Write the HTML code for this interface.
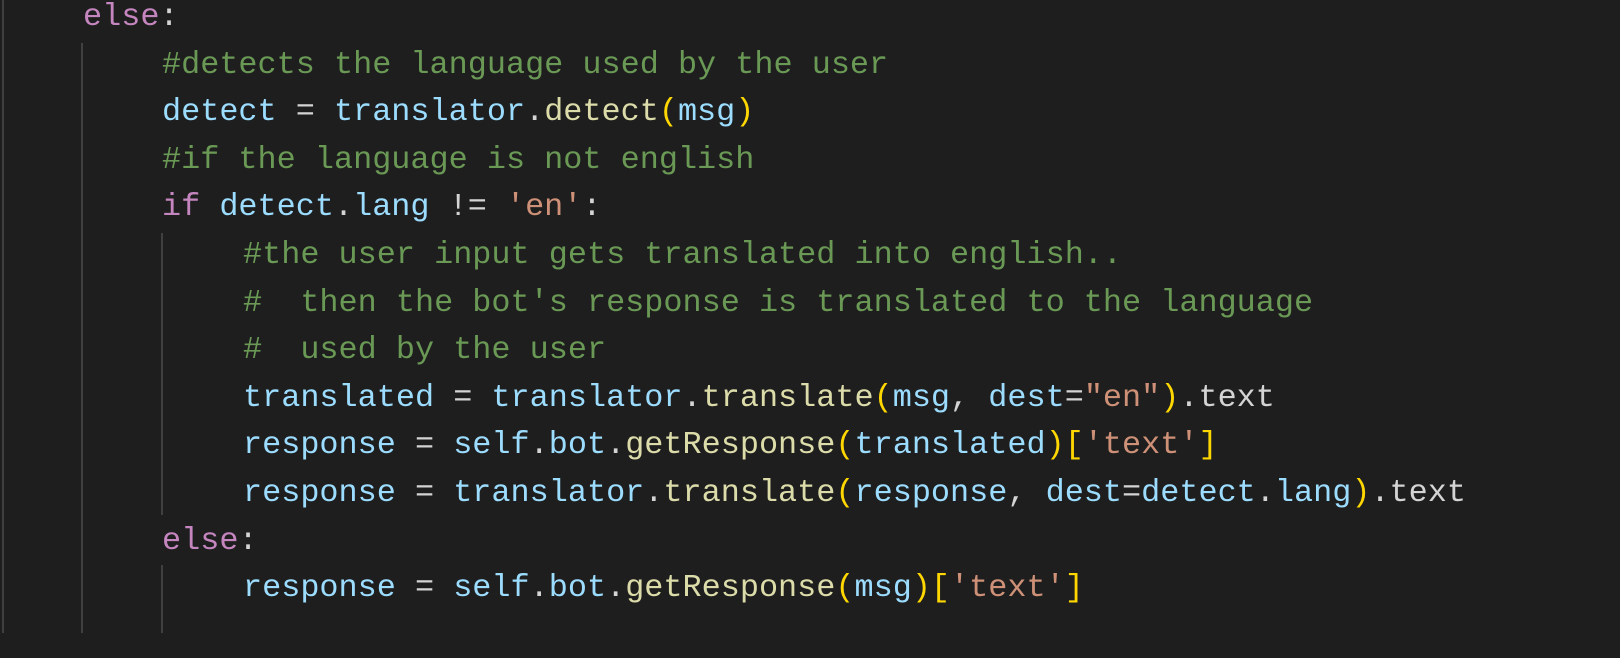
<!DOCTYPE html>
<html><head><style>
html,body{margin:0;padding:0;background:#1e1e1e;width:1620px;height:658px;overflow:hidden;position:relative}
.l{position:absolute;left:0;height:47.6px;line-height:47.6px;font-family:"Liberation Mono",monospace;font-size:31.85px;color:#d4d4d4;white-space:pre}
.k{color:#c586c0}.c{color:#6a9955}.v{color:#9cdcfe}.f{color:#dcdcaa}.s{color:#ce9178}.b{color:#ffd700}.p{color:#d4d4d4}
.g{position:absolute;width:2px;background:#404040}
</style></head><body>
<div class="g" style="left:2px;top:0;height:633px"></div>
<div class="g" style="left:81px;top:43px;height:590px"></div>
<div class="g" style="left:161px;top:233px;height:282px"></div>
<div class="g" style="left:161px;top:565px;height:68px"></div>

<div class="l" style="top:-7px;left:83px"><span class="k">else</span>:</div>
<div class="l" style="top:40.6px;left:162px"><span class="c">#detects the language used by the user</span></div>
<div class="l" style="top:88.2px;left:162px"><span class="v">detect</span> = <span class="v">translator</span>.<span class="f">detect</span><span class="b">(</span><span class="v">msg</span><span class="b">)</span></div>
<div class="l" style="top:135.8px;left:162px"><span class="c">#if the language is not english</span></div>
<div class="l" style="top:183.4px;left:162px"><span class="k">if</span> <span class="v">detect</span>.<span class="v">lang</span> != <span class="s">'en'</span>:</div>
<div class="l" style="top:231px;left:243px"><span class="c">#the user input gets translated into english..</span></div>
<div class="l" style="top:278.6px;left:243px"><span class="c">#  then the bot's response is translated to the language</span></div>
<div class="l" style="top:326.2px;left:243px"><span class="c">#  used by the user</span></div>
<div class="l" style="top:373.8px;left:243px"><span class="v">translated</span> = <span class="v">translator</span>.<span class="f">translate</span><span class="b">(</span><span class="v">msg</span>, <span class="v">dest</span>=<span class="s">"en"</span><span class="b">)</span>.text</div>
<div class="l" style="top:421.4px;left:243px"><span class="v">response</span> = <span class="v">self</span>.<span class="v">bot</span>.<span class="f">getResponse</span><span class="b">(</span><span class="v">translated</span><span class="b">)[</span><span class="s">'text'</span><span class="b">]</span></div>
<div class="l" style="top:469px;left:243px"><span class="v">response</span> = <span class="v">translator</span>.<span class="f">translate</span><span class="b">(</span><span class="v">response</span>, <span class="v">dest</span>=<span class="v">detect</span>.<span class="v">lang</span><span class="b">)</span>.text</div>
<div class="l" style="top:516.6px;left:162px"><span class="k">else</span>:</div>
<div class="l" style="top:564.2px;left:243px"><span class="v">response</span> = <span class="v">self</span>.<span class="v">bot</span>.<span class="f">getResponse</span><span class="b">(</span><span class="v">msg</span><span class="b">)[</span><span class="s">'text'</span><span class="b">]</span></div>
</body></html>
